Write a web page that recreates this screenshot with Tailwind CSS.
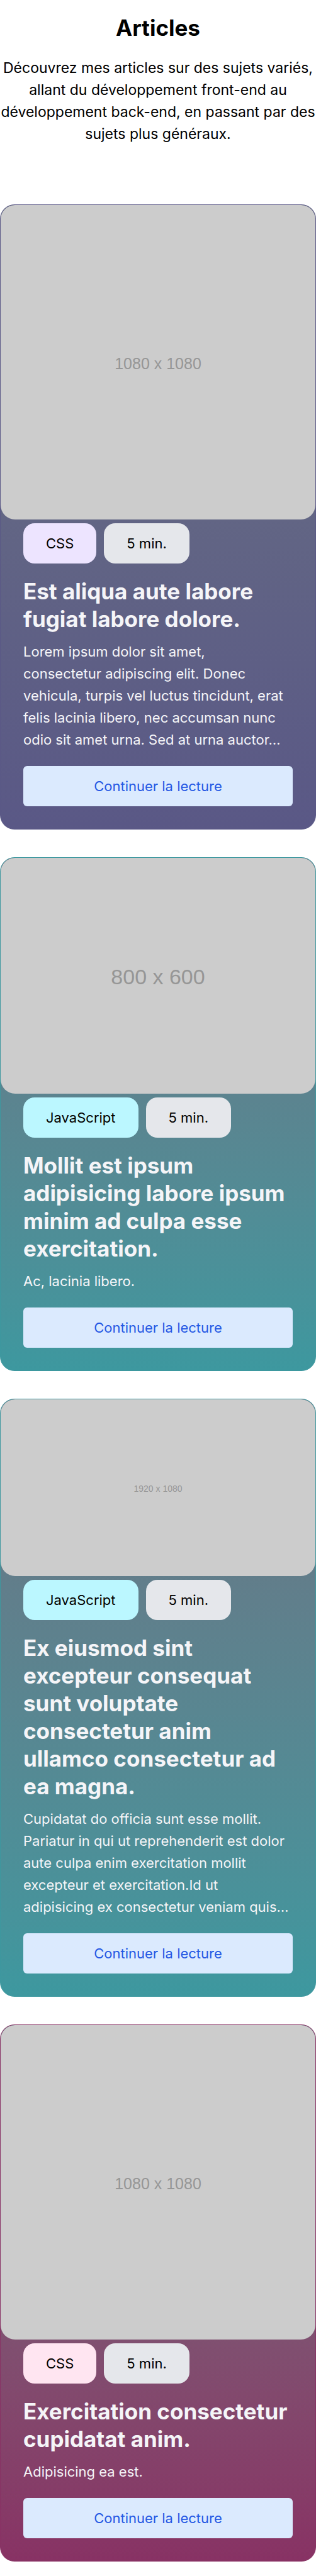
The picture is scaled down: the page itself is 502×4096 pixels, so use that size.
<!DOCTYPE html>
<html lang="fr">
<head>
<meta charset="utf-8">
<meta name="viewport" content="width=device-width, initial-scale=1">
<title>Articles</title>
<script src="https://cdn.jsdelivr.net/npm/@tailwindcss/browser@4"></script>
</head>
<body class="bg-white text-black font-['Inter',sans-serif] text-[23px] leading-[35px]">
<main class="pt-[21px] pb-6">
  <header class="text-center">
    <h1 class="text-[35px] leading-[47px] font-bold">Articles</h1>
    <p class="mt-[23px]">Découvrez mes articles sur des sujets variés, allant du développement front-end au développement back-end, en passant par des sujets plus généraux.</p>
  </header>

  <div class="mt-[94px] flex flex-col gap-11 text-[22px]">
    <article class="overflow-hidden rounded-[23px] border border-[#5a5886] bg-linear-to-b from-[#6a7282] to-[#5a5886]">
      <div role="img" aria-label="1080 x 1080" class="flex aspect-square items-center justify-center rounded-[23px] bg-[#ccc] pt-1 font-['Liberation_Sans',sans-serif] text-[25px] text-[#969696]">1080 x 1080</div>
      <div class="px-9 pt-1.5 pb-9 text-[#f5f5f8]">
        <ul class="flex gap-3 text-black">
          <li class="rounded-[18px] bg-[#ede4ff] px-9 py-[14px] leading-9">CSS</li>
          <li class="rounded-[18px] bg-[#e5e7eb] px-9 py-[14px] leading-9">5 min.</li>
        </ul>
        <h2 class="mt-[22px] text-[35px] leading-[44px] font-bold">Est aliqua aute labore fugiat labore dolore.</h2>
        <p class="mt-[13px] leading-[35px]">Lorem ipsum dolor sit amet,<br>consectetur adipiscing elit. Donec<br>vehicula, turpis vel luctus tincidunt, erat<br>felis lacinia libero, nec accumsan nunc<br>odio sit amet urna. Sed at urna auctor…</p>
        <a href="#" class="mt-6 block rounded-md bg-[#dbeafe] py-[14px] text-center leading-9 text-[#2458e4]">Continuer la lecture</a>
      </div>
    </article>

    <article class="overflow-hidden rounded-[23px] border border-[#3d989f] bg-linear-to-b from-[#6a7282] to-[#3d989f]">
      <div role="img" aria-label="800 x 600" class="flex aspect-4/3 items-center justify-center rounded-[23px] bg-[#ccc] pt-1 font-['Liberation_Sans',sans-serif] text-[34px] text-[#969696]">800 x 600</div>
      <div class="px-9 pt-1.5 pb-9 text-[#f5f5f8]">
        <ul class="flex gap-3 text-black">
          <li class="rounded-[18px] bg-[#bbf7ff] px-9 py-[14px] leading-9">JavaScript</li>
          <li class="rounded-[18px] bg-[#e5e7eb] px-9 py-[14px] leading-9">5 min.</li>
        </ul>
        <h2 class="mt-[22px] text-[35px] leading-[44px] font-bold">Mollit est ipsum adipisicing labore ipsum minim ad culpa esse exercitation.</h2>
        <p class="mt-[13px] leading-[35px]">Ac, lacinia libero.</p>
        <a href="#" class="mt-6 block rounded-md bg-[#dbeafe] py-[14px] text-center leading-9 text-[#2458e4]">Continuer la lecture</a>
      </div>
    </article>

    <article class="overflow-hidden rounded-[23px] border border-[#3d989f] bg-linear-to-b from-[#6a7282] to-[#3d989f]">
      <div role="img" aria-label="1920 x 1080" class="flex aspect-video items-center justify-center rounded-[23px] bg-[#ccc] pt-1 font-['Liberation_Sans',sans-serif] text-[14px] text-[#969696]">1920 x 1080</div>
      <div class="px-9 pt-1.5 pb-9 text-[#f5f5f8]">
        <ul class="flex gap-3 text-black">
          <li class="rounded-[18px] bg-[#bbf7ff] px-9 py-[14px] leading-9">JavaScript</li>
          <li class="rounded-[18px] bg-[#e5e7eb] px-9 py-[14px] leading-9">5 min.</li>
        </ul>
        <h2 class="mt-[22px] text-[35px] leading-[44px] font-bold">Ex eiusmod sint excepteur consequat sunt voluptate consectetur anim ullamco consectetur ad ea magna.</h2>
        <p class="mt-[13px] leading-[35px]">Cupidatat do officia sunt esse mollit.<br>Pariatur in qui ut reprehenderit est dolor<br>aute culpa enim exercitation mollit<br>excepteur et exercitation.Id ut<br>adipisicing ex consectetur veniam quis…</p>
        <a href="#" class="mt-6 block rounded-md bg-[#dbeafe] py-[14px] text-center leading-9 text-[#2458e4]">Continuer la lecture</a>
      </div>
    </article>

    <article class="overflow-hidden rounded-[23px] border border-[#883264] bg-linear-to-b from-[#6a7282] to-[#883264]">
      <div role="img" aria-label="1080 x 1080" class="flex aspect-square items-center justify-center rounded-[23px] bg-[#ccc] pt-1 font-['Liberation_Sans',sans-serif] text-[25px] text-[#969696]">1080 x 1080</div>
      <div class="px-9 pt-1.5 pb-9 text-[#f5f5f8]">
        <ul class="flex gap-3 text-black">
          <li class="rounded-[18px] bg-[#ffe5f1] px-9 py-[14px] leading-9">CSS</li>
          <li class="rounded-[18px] bg-[#e5e7eb] px-9 py-[14px] leading-9">5 min.</li>
        </ul>
        <h2 class="mt-[22px] text-[35px] leading-[44px] font-bold">Exercitation consectetur cupidatat anim.</h2>
        <p class="mt-[13px] leading-[35px]">Adipisicing ea est.</p>
        <a href="#" class="mt-6 block rounded-md bg-[#dbeafe] py-[14px] text-center leading-9 text-[#2458e4]">Continuer la lecture</a>
      </div>
    </article>
  </div>
</main>
</body>
</html>
